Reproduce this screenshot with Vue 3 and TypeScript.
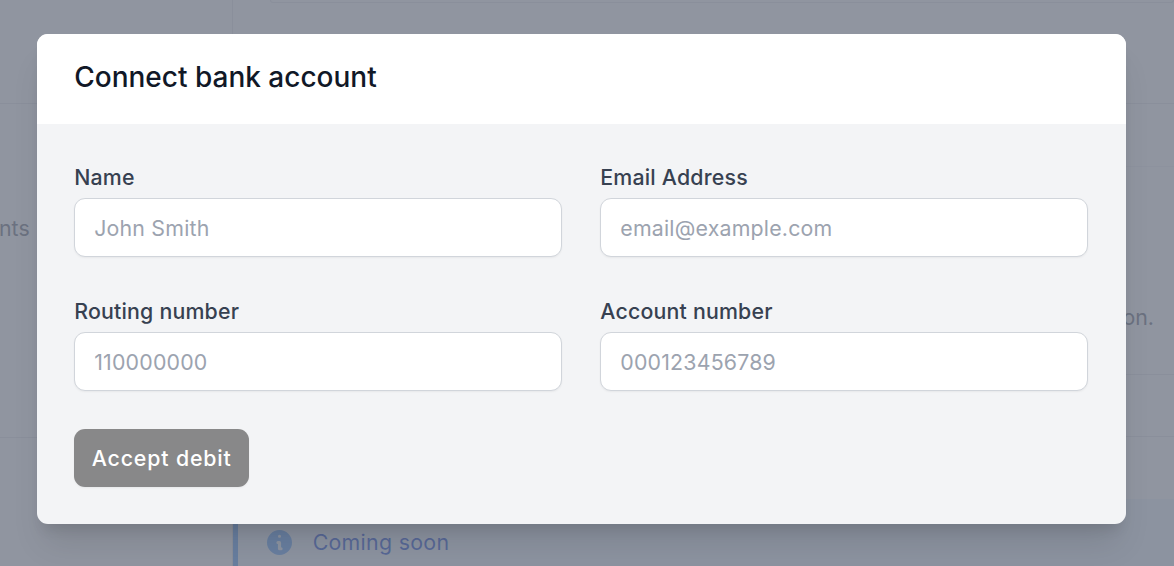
<script setup lang="ts">
interface Field {
  label: string
  placeholder: string
}

const fields: Field[] = [
  { label: 'Name', placeholder: 'John Smith' },
  { label: 'Email Address', placeholder: 'email@example.com' },
  { label: 'Routing number', placeholder: '110000000' },
  { label: 'Account number', placeholder: '000123456789' },
]
</script>

<template>
  <div class="page">
    <aside class="sidebar">
      <div class="side-row side-first"></div>
      <div class="side-row side-text"><span>Payments</span></div>
      <div class="side-rest"></div>
    </aside>
    <main class="main">
      <div class="top-card"></div>
      <div class="band band-a"></div>
      <div class="band band-a2"></div>
      <div class="band band-b"><span>information.</span></div>
      <div class="band band-c"></div>
      <div class="band band-d"></div>
      <div class="notice">
        <svg class="info" viewBox="2 2 16 16" aria-hidden="true">
          <path
            fill="currentColor"
            fill-rule="evenodd"
            clip-rule="evenodd"
            d="M18 10a8 8 0 11-16 0 8 8 0 0116 0zm-7-4a1 1 0 11-2 0 1 1 0 012 0zM9 9a1 1 0 000 2v3a1 1 0 001 1h1a1 1 0 100-2v-3a1 1 0 00-1-1H9z"
          />
        </svg>
        <span>Coming soon</span>
      </div>
    </main>
    <div class="overlay">
      <section class="modal">
        <header class="modal-head">
          <h2>Connect bank account</h2>
        </header>
        <form class="modal-body" @submit.prevent>
          <div class="grid">
            <label v-for="f in fields" :key="f.label" class="field">
              <span class="label">{{ f.label }}</span>
              <input class="input" type="text" :placeholder="f.placeholder" />
            </label>
          </div>
          <button class="submit" type="submit">Accept debit</button>
        </form>
      </section>
    </div>
  </div>
</template>

<style>
html, body { margin: 0; padding: 0; overflow: hidden; }
</style>

<style scoped>
.page {
  position: relative;
  display: flex;
  width: 1174px;
  height: 566px;
  overflow: hidden;
  background: #fff;
  font-family: Inter, "Liberation Sans", sans-serif;
}
.sidebar {
  width: 231.67px;
  flex: none;
  display: flex;
  flex-direction: column;
  border-right: 1px solid #e5e7eb;
  box-sizing: content-box;
}
.side-row { border-bottom: 1px solid #e5e7eb; }
.side-first { height: 103px; }
.side-text {
  height: 333px;
  display: flex;
  justify-content: flex-end;
  align-items: flex-start;
  padding-right: 202px;
  font-size: 21.33px;
  color: #6b7280;
  white-space: nowrap;
}
.side-text span { margin-top: 111px; }
.side-rest { flex: 1; }
.main {
  flex: 1;
  min-width: 0;
  display: flex;
  flex-direction: column;
}
.top-card {
  height: 2px;
  margin: 0 0 38px 37px;
  border: 1px solid #e5e7eb;
  border-top: 0;
  border-radius: 0 0 8px 8px;
}
.band { border-bottom: 1px solid #e5e7eb; }
.band-a { height: 62px; }
.band-a2 { height: 62px; border-bottom-color: #f3f4f6; }
.band-b {
  height: 207px;
  display: flex;
  justify-content: flex-end;
  padding-right: 20px;
  font-size: 21.33px;
  color: #6b7280;
}
.band-b span { margin-top: 137px; }
.band-c { height: 61px; }
.band-d { height: 62px; border-bottom: 0; }
.notice {
  flex: 1;
  display: flex;
  align-items: flex-end;
  gap: 21px;
  padding: 0 0 11px 29px;
  background: #eff6ff;
  border-left: 5.33px solid #60a5fa;
  color: #1d4ed8;
  font-size: 21.33px;
  letter-spacing: 0.3px;
}
.info { width: 25px; height: 25px; color: #60a5fa; }
.overlay {
  position: absolute;
  inset: 0;
  background: rgba(107, 114, 128, 0.75);
  display: flex;
  justify-content: flex-start;
  padding: 34px 0 0 37px;
  box-sizing: border-box;
}
.modal {
  width: 1088.5px;
  height: 490.4px;
  border-radius: 11px;
  overflow: hidden;
  background: #f3f4f6;
  box-shadow: 0 26px 33px -7px rgba(0, 0, 0, 0.1), 0 11px 13px -6px rgba(0, 0, 0, 0.1);
}
.modal-head {
  height: 90px;
  background: #fff;
  display: flex;
  align-items: center;
  padding: 0 37.2px 4px;
  box-sizing: border-box;
}
.modal-head h2 {
  margin: 0;
  font-size: 28px;
  line-height: 1.3;
  font-weight: 500;
  color: #111827;
}
.modal-body {
  padding: 37.33px 37.2px 0;
}
.grid {
  display: grid;
  grid-template-columns: 1fr 1fr;
  column-gap: 38px;
  row-gap: 38px;
}
.field { display: flex; flex-direction: column; }
.label {
  font-size: 21.33px;
  line-height: 33px;
  font-weight: 500;
  letter-spacing: 0.2px;
  color: #374151;
  margin-bottom: 4px;
}
.input {
  height: 59px;
  box-sizing: border-box;
  padding: 0 20px 0 19px;
  border: 1px solid #d1d5db;
  border-radius: 11px;
  background: #fff;
  font: inherit;
  font-size: 21.33px;
  letter-spacing: 0.2px;
  box-shadow: 0 1px 2px rgba(0, 0, 0, 0.05);
  outline: none;
}
.input::placeholder { color: #9ca3af; opacity: 1; }
.submit {
  display: block;
  margin-top: 37.8px;
  width: 175px;
  height: 58px;
  padding: 0;
  border: 0;
  border-radius: 11px;
  background: #888889;
  color: #fff;
  font: inherit;
  font-size: 21.33px;
  font-weight: 500;
  letter-spacing: 0.85px;
  box-shadow: 0 1px 2px rgba(0, 0, 0, 0.05);
}
</style>
